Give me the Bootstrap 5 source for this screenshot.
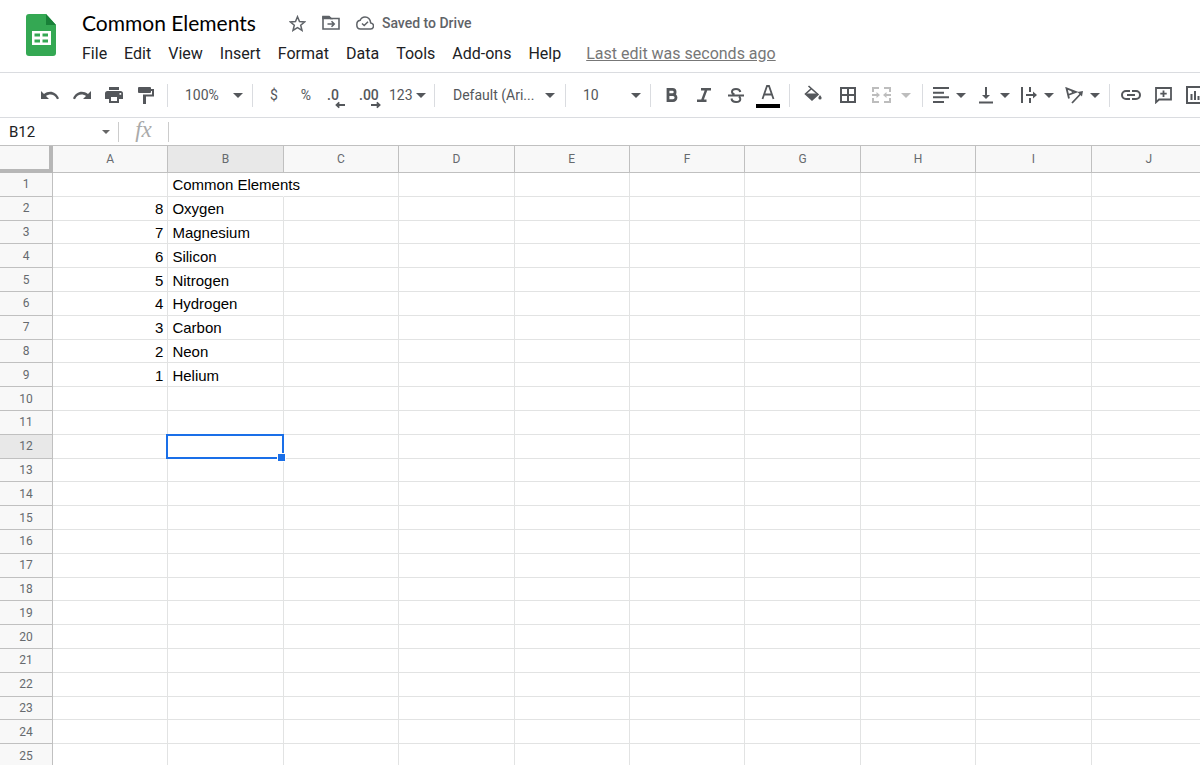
<!DOCTYPE html>
<html lang="en">
<head>
<meta charset="utf-8">
<meta name="viewport" content="width=device-width, initial-scale=1">
<title>Common Elements</title>
<link href="https://cdn.jsdelivr.net/npm/bootstrap@5.3.0/dist/css/bootstrap.min.css" rel="stylesheet">
<style>
  :root { --ink: #202124; --tool: #54575b; --line: #dadce0; --rule: #c0c0c0; --cell: #e2e3e3; --blue: #1a6fe8; }
  body { font-family: Roboto, "Liberation Sans", sans-serif; color: var(--ink); background: #fff; }
  svg { display: block; flex: none; }
  .app-head { padding: 8px 26px 4px; border-bottom: 1px solid var(--line); column-gap: 26px; }
  .app-logo { padding-top: 6px; }
  .doc-title { font: 400 21px/32px Lato, "Liberation Sans", sans-serif; color: #000; margin: 0; }
  .doc-row { height: 30px; }
  .doc-icons { margin-left: 33px; gap: 16px; color: #5f6368; }
  .menu-row { gap: 17px; height: 30px; padding-top: 2px; font-size: 16px; line-height: 28px; }
  .plain { border: 0; background: none; padding: 0; color: inherit; font: inherit; }
  .plain.saved { font-size: 14px; font-weight: 500; line-height: 20px; gap: 8px; }
  .last-edit { color: #777; margin-left: 8px; }
  .tools { height: 45px; padding-left: 34px; border-bottom: 1px solid var(--line); color: var(--tool); overflow: hidden; font-size: 14px; }
  .tools > * { flex: none; }
  .tool { height: 32px; width: 32px; display: flex; align-items: center; justify-content: center; }
  .tool.roomy { width: 35px; }
  .tool.split { width: 44px; gap: 6px; justify-content: flex-start; padding-left: 4px; }
  .tool.split.first-split { width: 52px; padding-left: 7px; gap: 10px; }
  .tool.text-menu { width: 43px; gap: 3px; justify-content: flex-start; padding-left: 3px; }
  .tool.decimals { justify-content: flex-start; padding-left: 5px; font-weight: 500; }
  .divide { width: 1px; height: 23px; background: var(--line); margin: 0 5px; }
  .caret { width: 0; height: 0; flex: none; border: 5px solid transparent; border-bottom: 0; border-top-color: currentColor; }
  .caret.tiny { border-width: 4px 4px 0; color: #666; }
  .pick { appearance: none; border: 0; height: 32px; color: inherit; padding: 0 26px 0 12px;
    background: url("data:image/svg+xml,%3Csvg xmlns='http://www.w3.org/2000/svg' width='10' height='5'%3E%3Cpath d='M0 0h10L5 5z' fill='%2354575b'/%3E%3C/svg%3E") no-repeat right 4px center; }
  .pick.narrow { width: 74px; }
  .pick.font-pick { width: 120px; padding-left: 13px; padding-right: 18px; background-position: right 5px center; }
  .muted-tool { color: #bdbdbd; }
  .formula { height: 28px; border-bottom: 1px solid var(--rule); }
  .name-box { width: 94px; border: 0; padding: 0 0 0 9px; height: 26px; font-size: 15px; color: var(--ink); }
  .formula .vline { width: 1px; height: 20px; background: #ccc; }
  .fx { font: italic 23px/24px "Liberation Serif", serif; color: #aaa; width: 49px; height: 27px; text-align: center; }
  .entry { border: 0; outline: 0; min-width: 0; height: 26px; padding: 0 6px; }
  .grid-area { min-height: 0; overflow: hidden; }
  .cells { table-layout: fixed; border-collapse: separate; border-spacing: 0; width: calc(100% + 7px); height: calc(100% + 3px); font: 15px/18px "Liberation Sans", Arial, sans-serif; color: #000; }
  .cells th, .cells td { padding: 0 4px; border: 0 solid var(--cell); border-width: 0 1px 1px 0; white-space: nowrap; overflow: visible; }
  .cells td { padding-top: 2px; }
  .cells th { background: #f8f8f8; color: #666a6e; font: 400 12px/20px Roboto, sans-serif; text-align: center; border-color: var(--rule); }
  .cells thead th { height: 27px; }
  .cells .row-name { width: 53px; }
  .cells .corner { border-width: 0 4px 4px 0; border-color: #b7b7b7; }
  .cells th.picked { background: #e8e8e8; }
  .cells td.spill { border-right-color: transparent; }
  .cells td.active { position: relative; }
  .active::before { content: ""; position: absolute; inset: -1px -1px -1px -2px; border: 2px solid var(--blue); }
  .active::after { content: ""; position: absolute; right: -3px; bottom: -4px; width: 9px; height: 9px; background: var(--blue); border: 1px solid #fff; }
</style>
</head>
<body class="vh-100 d-flex flex-column overflow-hidden">
<header class="app-head d-flex">
  <a href="#" class="app-logo" aria-label="Sheets home">
    <svg width="30" height="42" viewBox="0 0 30 42"><path d="M3 0h17l10 11v28a3 3 0 0 1-3 3H3a3 3 0 0 1-3-3V3a3 3 0 0 1 3-3z" fill="#34a853"/><path d="M20 0l10 11H20z" fill="#188038"/><path fill="#fff" fill-rule="evenodd" d="M6 17h19v14H6zM8.500 19.500v3h5.500v-3zm8 0v3H22v-3zm-8 6v3h5.500v-3zm8 0v3H22v-3z"/></svg>
  </a>
  <div class="flex-grow-1">
    <div class="doc-row d-flex align-items-center">
      <h1 class="doc-title">Common Elements</h1>
      <div class="doc-icons d-flex align-items-center">
        <button class="plain" aria-label="Star"><svg width="17" height="17" viewBox="0 0 17 17" fill="none" stroke="currentColor" stroke-width="1.500"><path d="M8.500 1.700l2 4.800 5.200.4-4 3.400 1.300 5.100-4.500-2.700L4 15.400l1.300-5.100-4-3.400 5.200-.4z"/></svg></button>
        <button class="plain" aria-label="Move"><svg width="18" height="16" viewBox="0 0 18 16" fill="none" stroke="currentColor" stroke-width="1.600"><path d="M1 2.500V14h16V3.500H8.500L7 2H1z"/><path d="M1 1.500h6l2 2H1z" fill="currentColor"/><path d="M5.500 9H12M9.500 6.300L12.200 9l-2.700 2.700"/></svg></button>
        <button class="plain saved d-flex align-items-center"><svg width="18" height="14" viewBox="0 0 18 14" fill="none" stroke="currentColor" stroke-width="1.500"><path d="M4.500 13h9.700a3 3 0 0 0 .5-6.100C14.200 3.200 12 1 9 1 6.800 1 5 2.200 4.200 4.300 2.200 4.600.8 6.300.8 8.700.8 11.200 2.300 13 4.500 13z"/><path d="M6 7.500l2.200 2L12 5.700"/></svg>Saved to Drive</button>
      </div>
    </div>
    <nav class="menu-row d-flex" aria-label="Menu">
      <button class="plain">File</button><button class="plain">Edit</button><button class="plain">View</button><button class="plain">Insert</button><button class="plain">Format</button><button class="plain">Data</button><button class="plain">Tools</button><button class="plain">Add-ons</button><button class="plain">Help</button>
      <a href="#" class="last-edit">Last edit was seconds ago</a>
    </nav>
  </div>
</header>

<div class="tools d-flex align-items-center" role="toolbar" aria-label="Formatting">
  <button class="plain tool" aria-label="Undo"><svg width="20" height="18" viewBox="0 0 20 18"><path d="M1 5v8h8L6 10c3.500-2.500 8.500-2 11 3.200l2-.8C16 5 9 4 4 8z" fill="currentColor"/></svg></button>
  <button class="plain tool" aria-label="Redo"><svg width="20" height="18" viewBox="0 0 20 18"><path d="M19 5v8h-8l3-3C10.500 7.500 5.500 8 3 13.200l-2-.8C4 5 11 4 16 8z" fill="currentColor"/></svg></button>
  <button class="plain tool" aria-label="Print"><svg width="18" height="16" viewBox="0 0 18 16" fill="currentColor"><path d="M4 0h10v3H4z"/><path fill-rule="evenodd" d="M2.500 4h13A2.500 2.500 0 0 1 18 6.500V12h-4v4H4v-4H0V6.500A2.500 2.500 0 0 1 2.500 4zM6 10v4h6v-4zM14.500 6v1.700h1.700V6z"/></svg></button>
  <button class="plain tool" aria-label="Paint format"><svg width="16" height="17" viewBox="0 0 16 17" fill="currentColor"><path d="M1 0h11a1 1 0 0 1 1 1v1h3v7.500H8V17H5V7.500h9V4h-1v1a1 1 0 0 1-1 1H1a1 1 0 0 1-1-1V1a1 1 0 0 1 1-1z"/></svg></button>
  <span class="divide"></span>
  <select class="pick narrow" aria-label="Zoom"><option>100%</option><option>75%</option></select>
  <span class="divide"></span>
  <button class="plain tool" aria-label="Currency">$</button>
  <button class="plain tool" aria-label="Percent">%</button>
  <button class="plain tool decimals position-relative" aria-label="Fewer decimals">.0<svg class="position-absolute bottom-0 end-0 me-2" width="12" height="10" viewBox="0 0 12 10" fill="none" stroke="currentColor" stroke-width="1.800"><path d="M11 4H3M5.300 1.300L2.500 4l2.800 2.700"/></svg></button>
  <button class="plain tool decimals position-relative" aria-label="More decimals">.00<svg class="position-absolute bottom-0 end-0 me-1" width="12" height="10" viewBox="0 0 12 10" fill="none" stroke="currentColor" stroke-width="1.800"><path d="M1 4h8.500M6.800 1.300L9.600 4 6.800 6.700"/></svg></button>
  <button class="plain tool text-menu">123<span class="caret"></span></button>
  <span class="divide"></span>
  <select class="pick font-pick" aria-label="Font"><option>Default (Ari...</option><option>Roboto</option></select>
  <span class="divide"></span>
  <select class="pick narrow" aria-label="Font size"><option>10</option><option>12</option></select>
  <span class="divide"></span>
  <button class="plain tool" aria-label="Bold"><svg width="12" height="14" viewBox="0 0 12 14" fill="none" stroke="currentColor" stroke-width="2.800"><path d="M2 1.400h4.500a2.600 2.600 0 0 1 0 5.200H2h5a3 3 0 0 1 0 6H2zV14"/></svg></button>
  <button class="plain tool" aria-label="Italic"><svg width="14" height="14" viewBox="0 0 14 14" fill="none" stroke="currentColor" stroke-width="2.400"><path d="M4 1.200h10M9.500 1L5 13M0 12.800h9.500"/></svg></button>
  <button class="plain tool" aria-label="Strikethrough"><svg width="16" height="15" viewBox="0 0 16 15" fill="none" stroke="currentColor" stroke-width="2"><path d="M0 7.500h16M12.300 4C12 2 10.500 1 8 1 5.500 1 4 2.100 4 3.800 4 5 4.800 6 6.500 6.500M3.500 10.500c.3 2.200 2 3.500 4.600 3.500 2.700 0 4.200-1.200 4.200-3 0-1-.5-1.800-1.300-2.400"/></svg></button>
  <button class="plain tool" aria-label="Text colour"><svg width="24" height="26" viewBox="0 0 24 26"><path d="M6.500 17L11 4h2l4.500 13M8 12.500h8" fill="none" stroke="currentColor" stroke-width="1.800"/><path d="M0 22h24v4H0z" fill="#000"/></svg></button>
  <span class="divide"></span>
  <button class="plain tool roomy" aria-label="Fill colour"><svg width="18" height="20" viewBox="0 0 18 20"><path d="M4.500 1L14 9.500 8 15 1.500 9l6-5.500" fill="none" stroke="currentColor" stroke-width="1.600"/><path d="M1.500 8.500h12.500L8 15.300z" fill="currentColor"/><path d="M16 10c1 1.400 1.600 2.100 1.600 2.900a1.600 1.600 0 0 1-3.200 0c0-.8.600-1.500 1.600-2.900z" fill="currentColor"/></svg></button>
  <button class="plain tool roomy" aria-label="Borders"><svg width="16" height="16" viewBox="0 0 16 16" fill="none" stroke="currentColor" stroke-width="2"><path d="M1 1h14v14H1zM8 1v14M1 8h14"/></svg></button>
  <button class="plain tool split first-split muted-tool" aria-label="Merge cells" disabled><svg width="19" height="16" viewBox="0 0 19 16" fill="none" stroke="currentColor" stroke-width="2"><path d="M1 5V1h6M12 1h6v4M18 11v4h-6M7 15H1v-4M0 8h6M13 8h6"/><path d="M4.500 5l3.500 3-3.500 3zM14.500 5L11 8l3.500 3z" fill="currentColor" stroke="none"/></svg><span class="caret"></span></button>
  <span class="divide"></span>
  <button class="plain tool split" aria-label="Horizontal align"><svg width="18" height="16" viewBox="0 0 18 16" fill="none" stroke="currentColor" stroke-width="2"><path d="M1 1h16M1 5.700h11M1 10.300h16M1 15h11"/></svg><span class="caret"></span></button>
  <button class="plain tool split" aria-label="Vertical align"><svg width="18" height="18" viewBox="0 0 18 18" fill="none" stroke="currentColor" stroke-width="2"><path d="M3 16.500h14M10 1v10"/><path d="M6 9h8l-4 4z" fill="currentColor" stroke="none"/></svg><span class="caret"></span></button>
  <button class="plain tool split" aria-label="Text wrapping"><svg width="18" height="16" viewBox="0 0 18 16" fill="none" stroke="currentColor" stroke-width="2"><path d="M2 0v16M10 0v5M10 11v5M6 8h9"/><path d="M13 4.500l4 3.500-4 3.500z" fill="currentColor" stroke="none"/></svg><span class="caret"></span></button>
  <button class="plain tool split" aria-label="Text rotation"><svg width="20" height="17" viewBox="0 0 20 17" fill="none" stroke="currentColor" stroke-width="1.800"><path d="M5 11.500L2.500 1.300 12 5L4 8M8 3.500l1.200 3M8 16L17 6.500"/><path d="M19 4l-1 5.500-4.500-4.500z" fill="currentColor" stroke="none"/></svg><span class="caret"></span></button>
  <span class="divide"></span>
  <button class="plain tool" aria-label="Link"><svg width="20" height="10" viewBox="0 0 20 10" fill="none" stroke="currentColor" stroke-width="2"><path d="M9 1H5a4 4 0 0 0 0 8h4M11 1h4a4 4 0 0 1 0 8h-4M6 5h8"/></svg></button>
  <button class="plain tool" aria-label="Comment"><svg width="17" height="17" viewBox="0 0 17 17" fill="none" stroke="currentColor" stroke-width="1.800"><path d="M1 1h15v11.500H4L1 15.300zM8.500 3.500V10M5.300 6.700h6.400"/></svg></button>
  <button class="plain tool" aria-label="Chart"><svg width="18" height="18" viewBox="0 0 18 18" fill="none" stroke="currentColor" stroke-width="2"><path d="M1 1h16v16H1zM5.500 8v6M9 5v9M12.500 10v4"/></svg></button>
</div>

<div class="formula d-flex align-items-center">
  <input class="name-box" aria-label="Name box" value="B12">
  <button class="plain d-flex justify-content-center px-1" aria-label="Named ranges"><span class="caret tiny mx-1"></span></button>
  <span class="vline"></span>
  <label class="fx" for="entry">fx</label>
  <span class="vline"></span>
  <input class="entry flex-grow-1" id="entry">
</div>

<main class="grid-area flex-grow-1">
  <table class="cells" id="sheet">
    <thead><tr><th class="corner row-name" aria-label="Select all"></th></tr></thead>
    <tbody></tbody>
  </table>
</main>

<script src="https://cdn.jsdelivr.net/npm/bootstrap@5.3.0/dist/js/bootstrap.bundle.min.js"></script>
<script>
  const columns = [..."ABCDEFGHIJ"];
  const rowCount = 25;
  const values = [["", "Common Elements"], [8, "Oxygen"], [7, "Magnesium"], [6, "Silicon"], [5, "Nitrogen"],
                  [4, "Hydrogen"], [3, "Carbon"], [2, "Neon"], [1, "Helium"]];
  const active = { row: 12, col: 1 };
  const sheet = document.getElementById("sheet");
  columns.forEach((name, c) => {
    const th = document.createElement("th");
    th.scope = "col";
    th.textContent = name;
    th.classList.toggle("picked", c === active.col);
    sheet.tHead.rows[0].append(th);
  });
  for (let r = 1; r <= rowCount; r++) {
    const tr = sheet.tBodies[0].insertRow();
    const th = document.createElement("th");
    th.scope = "row";
    th.textContent = r;
    th.classList.toggle("picked", r === active.row);
    tr.append(th);
    columns.forEach((_, c) => {
      const td = tr.insertCell();
      td.textContent = values[r - 1]?.[c] ?? "";
      if (c === 0) td.classList.add("text-end");
      if (r === 1 && c === 1) td.classList.add("spill");
      if (r === active.row && c === active.col) td.classList.add("active");
    });
  }
</script>
</body>
</html>
